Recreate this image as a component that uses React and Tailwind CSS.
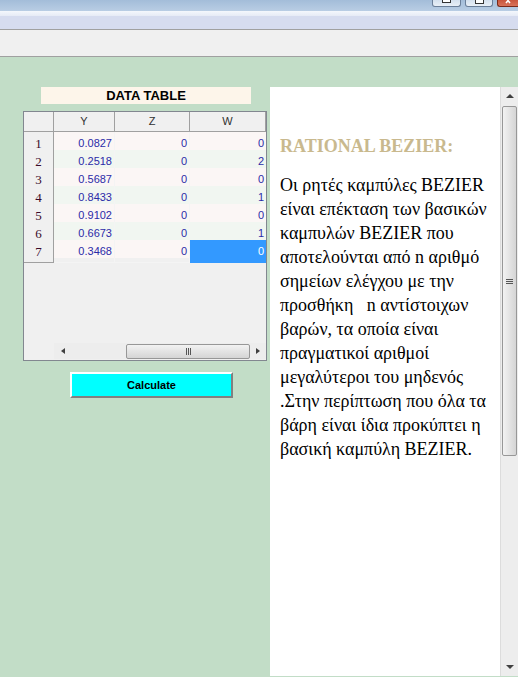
import React from 'react'

const rows = [
    ['0.0827', '0', '0'],
    ['0.2518', '0', '2'],
    ['0.5687', '0', '0'],
    ['0.8433', '0', '1'],
    ['0.9102', '0', '0'],
    ['0.6673', '0', '1'],
    ['0.3468', '0', '0'],
]

const sans = { fontFamily: '"Liberation Sans", Arial, sans-serif' }

const DataTable = () => {
    return (
        <div className="w-[244px] h-[250px] border border-[#828790] bg-[#f0f0f0] flex flex-col" style={sans}>
            {/* header */}
            <div className="grid grid-cols-[30px_61px_75px_76px] h-[20px] text-[11px] text-[#303030]">
                <div className="border-r border-b border-[#a0a0a0] bg-[#f0f0f0]"></div>
                {['Y', 'Z', 'W'].map((h) => (
                    <div key={h} className="border-r border-b border-[#a0a0a0] bg-[#f0f0f0] flex items-center justify-center">{h}</div>
                ))}
            </div>
            {rows.map((r, i) => (
                <div key={i} className={`grid grid-cols-[30px_61px_75px_76px] h-[18px] text-[11px] text-[#2b2ba8] ${i % 2 ? 'bg-[#f1f6f1]' : 'bg-[#fbf6f5]'}`}>
                    <div className="border-r border-b border-[#a0a0a0] bg-[#f0f0f0] flex items-center justify-center text-[13px] text-[#3a0a2a] pt-[2px]" style={{ fontFamily: '"Liberation Serif", serif' }}>{i + 1}</div>
                    <div className="border-r border-b border-[#f4f4f4] flex items-center justify-end pr-[2px]">{r[0]}</div>
                    <div className="border-r border-b border-[#f4f4f4] flex items-center justify-end pr-[2px]">{r[1]}</div>
                    <div className={`border-b flex items-center justify-end pr-[2px] ${i === 6 ? 'bg-[#3399ff] text-white border-[#3399ff]' : 'border-[#f4f4f4]'}`}>{r[2]}</div>
                </div>
            ))}
            <div className="flex-1"></div>
            {/* horizontal scrollbar */}
            <div className="flex h-[16px] mb-[1px]">
                <div className="w-[30px]"></div>
                <div className="flex-1 flex items-center bg-[#ededed]">
                    <div className="w-[17px] flex items-center justify-center">
                        <div className="w-0 h-0 border-y-[3px] border-y-transparent border-r-[4px] border-r-[#404040]"></div>
                    </div>
                    <div className="w-[55px]"></div>
                    <div className="w-[124px] h-[15px] rounded-[2px] border border-[#979797] bg-gradient-to-b from-[#f2f2f2] to-[#d5d5d5] flex items-center justify-center gap-[1px]">
                        <div className="w-[1px] h-[7px] bg-[#555]"></div>
                        <div className="w-[1px] h-[7px] bg-[#555]"></div>
                        <div className="w-[1px] h-[7px] bg-[#555]"></div>
                    </div>
                    <div className="flex-1 flex items-center justify-center">
                        <div className="w-0 h-0 border-y-[3px] border-y-transparent border-l-[4px] border-l-[#404040]"></div>
                    </div>
                </div>
            </div>
        </div>
    )
}

const VScroll = () => {
    return (
        <div className="w-[18px] border-l border-[#dcdcdc] bg-[#ededed] flex flex-col items-center">
            <div className="h-[18px] w-full flex items-center justify-center">
                <div className="w-0 h-0 border-x-[4px] border-x-transparent border-b-[4px] border-b-[#404040]"></div>
            </div>
            <div className="w-[15px] h-[350px] mt-[1px] rounded-[2px] border border-[#979797] bg-gradient-to-r from-[#f2f2f2] to-[#d5d5d5] flex flex-col items-center justify-center gap-[1px]">
                <div className="w-[7px] h-[1px] bg-[#555]"></div>
                <div className="w-[7px] h-[1px] bg-[#555]"></div>
                <div className="w-[7px] h-[1px] bg-[#555]"></div>
            </div>
            <div className="flex-1"></div>
            <div className="h-[18px] w-full flex items-center justify-center">
                <div className="w-0 h-0 border-x-[4px] border-x-transparent border-t-[4px] border-t-[#404040]"></div>
            </div>
        </div>
    )
}

const App = () => {
    return (
        <div className="w-[518px] h-[677px] flex flex-col overflow-hidden bg-[#c2ddc7]">
            {/* window chrome */}
            <div className="h-[11px] bg-gradient-to-b from-[#a3bdd9] to-[#b9cde4] flex justify-end items-start">
                <div className="w-[29px] h-[7px] mr-[4px] rounded-b-[3px] border border-t-0 border-[#6b7f99] bg-gradient-to-b from-[#d4e0ee] to-[#e9eff7] flex justify-center">
                    <div className="w-[9px] h-[3px] bg-white border border-t-0 border-[#333]"></div>
                </div>
                <div className="w-[28px] h-[7px] mr-[4px] rounded-b-[3px] border border-t-0 border-[#6b7f99] bg-gradient-to-b from-[#d4e0ee] to-[#e9eff7] flex justify-center">
                    <div className="w-[9px] h-[4px] bg-white border border-t-0 border-[#333]"></div>
                </div>
                <div className="w-[21px] h-[7px] rounded-bl-[3px] border border-t-0 border-r-0 border-[#7a2a1a] bg-gradient-to-b from-[#c8553c] to-[#d9735a] flex justify-center">
                    <svg width="10" height="5" viewBox="0 0 10 5">
                        <path d="M3 -2 L7 3 M7 -2 L3 3" stroke="#fff" strokeWidth="1.6" />
                    </svg>
                </div>
            </div>
            <div className="h-[5px] bg-gradient-to-b from-[#f4f7fc] to-[#e6ebf6]"></div>
            <div className="h-[14px] bg-[#d6dcef] border-b border-[#a0a0a0]"></div>
            <div className="h-[27px] bg-[#f0f0f0] border-b border-[#a0a0a0]"></div>

            {/* content */}
            <div className="flex-1 flex pt-[30px] pl-[23px] pb-[1px] min-h-0">
                <div className="w-[244px] flex flex-col">
                    <div className="ml-[18px] w-[210px] h-[17px] bg-[#fdf5ea] flex items-center justify-center text-[13px] font-bold text-black" style={sans}>DATA TABLE</div>
                    <div className="mt-[7px]">
                        <DataTable />
                    </div>
                    <button className="mt-[11px] ml-[47px] w-[163px] h-[26px] bg-[#00ffff] border-2 border-t-white border-l-white border-b-[#808080] border-r-[#808080] text-[11px] font-bold text-black" style={sans}>
                        Calculate
                    </button>
                </div>

                <div className="ml-[3px] flex-1 flex bg-white">
                    <div className="flex-1 pl-[10px] pr-[4px] pt-[47px] text-[18px] leading-[24px] text-black" style={{ fontFamily: '"Liberation Serif", serif' }}>
                        <h2 className="font-bold text-[#c9b98e]">RATIONAL BEZIER:</h2>
                        <p className="mt-[15px]">
                            Οι ρητές καμπύλες BEZIER είναι επέκταση των βασικών καμπυλών BEZIER που αποτελούνται από n αριθμό σημείων ελέγχου με την προσθήκη &nbsp; n αντίστοιχων βαρών, τα οποία είναι πραγματικοί αριθμοί μεγαλύτεροι του μηδενός .Στην περίπτωση που όλα τα βάρη είναι ίδια προκύπτει η βασική καμπύλη BEZIER.
                        </p>
                    </div>
                    <VScroll />
                </div>
            </div>
        </div>
    )
}

export default App
